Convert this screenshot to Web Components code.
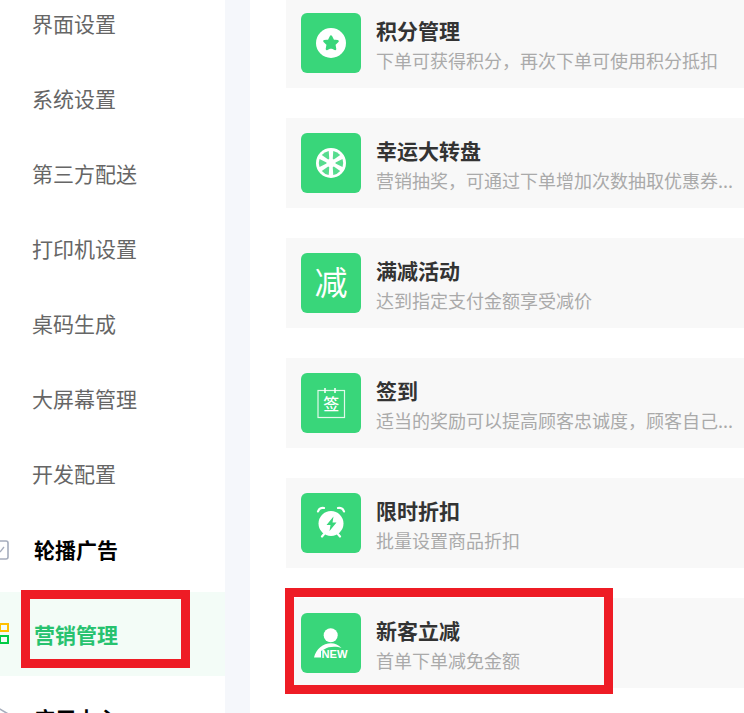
<!DOCTYPE html>
<html>
<head>
<meta charset="utf-8">
<style>
  html, body { margin: 0; height: 713px; overflow: hidden; background: #fff; }
  body { font-family: "Noto Sans CJK SC", "Liberation Sans", sans-serif; }
</style>
</head>
<body>
<app-shell>
  <side-menu slot="side">
    <menu-row>界面设置</menu-row>
    <menu-row>系统设置</menu-row>
    <menu-row>第三方配送</menu-row>
    <menu-row>打印机设置</menu-row>
    <menu-row>桌码生成</menu-row>
    <menu-row>大屏幕管理</menu-row>
    <menu-row>开发配置</menu-row>
    <menu-head icon="ad">轮播广告</menu-head>
    <menu-head icon="grid" active>营销管理</menu-head>
    <menu-head icon="app">应用中心</menu-head>
  </side-menu>
  <promo-list slot="main">
    <promo-card title="积分管理" desc="下单可获得积分，再次下单可使用积分抵扣" icon="star"></promo-card>
    <promo-card title="幸运大转盘" desc="营销抽奖，可通过下单增加次数抽取优惠券..." icon="wheel"></promo-card>
    <promo-card title="满减活动" desc="达到指定支付金额享受减价" icon="minus"></promo-card>
    <promo-card title="签到" desc="适当的奖励可以提高顾客忠诚度，顾客自己..." icon="sign"></promo-card>
    <promo-card title="限时折扣" desc="批量设置商品折扣" icon="clock"></promo-card>
    <promo-card title="新客立减" desc="首单下单减免金额" icon="new"></promo-card>
  </promo-list>
  <mark-box style="left:21px;top:590px;width:169px;height:78px"></mark-box>
  <mark-box style="left:285px;top:588px;width:328px;height:106px"></mark-box>
</app-shell>
<script>
const shellTemplate = document.createElement('template');
shellTemplate.innerHTML = `
<style>
  :host { display: grid; grid-template-columns: 225px 25px 1fr; height: 713px; position: relative; overflow: hidden; }
  .gutter { background: #f5f7fb; }
</style>
<slot name="side"></slot>
<div class="gutter"></div>
<slot name="main"></slot>
<slot></slot>`;

class AppShell extends HTMLElement {
  constructor() {
    super();
    this.attachShadow({ mode: 'open' });
    this.shadowRoot.appendChild(shellTemplate.content.cloneNode(true));
  }
}

const sideTemplate = document.createElement('template');
sideTemplate.innerHTML = `
<style>
  :host { display: flex; flex-direction: column; margin-top: -15px; background: #fff; }
</style>
<slot></slot>`;

class SideMenu extends HTMLElement {
  constructor() {
    super();
    this.attachShadow({ mode: 'open' });
    this.shadowRoot.appendChild(sideTemplate.content.cloneNode(true));
  }
}

const rowTemplate = document.createElement('template');
rowTemplate.innerHTML = `
<style>
  :host { display: flex; align-items: center; flex: none; height: 75px; padding-left: 32px; font-size: 21px; color: #666; }
</style>
<slot></slot>`;

class MenuRow extends HTMLElement {
  constructor() {
    super();
    this.attachShadow({ mode: 'open' });
    this.shadowRoot.appendChild(rowTemplate.content.cloneNode(true));
  }
}

const menuIcons = {
  ad: `<svg width="10" height="24" viewBox="0 0 10 24" fill="none" stroke="#a6adbd" stroke-width="1.6"><rect x="-9" y="4" width="17" height="18" rx="2"/><path d="M0 15L4 10" stroke-width="1.3"/></svg>`,
  grid: `<svg width="10" height="24" viewBox="0 0 10 24" fill="none" stroke-width="2"><rect x="0" y="2" width="8" height="7" stroke="#ffc000"/><rect x="0" y="14" width="8" height="7" stroke="#00cc44"/></svg>`,
  app: `<svg width="10" height="24" viewBox="0 0 10 24" fill="none" stroke="#a6adbd" stroke-width="1.6"><path d="M-2 2L10 9"/></svg>`
};

const headTemplate = document.createElement('template');
headTemplate.innerHTML = `
<style>
  :host { display: flex; align-items: center; flex: none; height: 84px; gap: 24px; font-size: 21px; font-weight: 700; color: #000; }
  :host([icon="ad"]) { margin-top: -3px; margin-bottom: 1px; }
  :host([active]) { background: #f3fcf7; color: #27c26f; }
  .ico { display: flex; width: 10px; }
</style>
<span class="ico"></span><slot></slot>`;

class MenuHead extends HTMLElement {
  constructor() {
    super();
    this.attachShadow({ mode: 'open' });
    this.shadowRoot.appendChild(headTemplate.content.cloneNode(true));
  }
  connectedCallback() {
    this.shadowRoot.querySelector('.ico').innerHTML = menuIcons[this.getAttribute('icon')];
  }
}

const listTemplate = document.createElement('template');
listTemplate.innerHTML = `
<style>
  :host { display: flex; flex-direction: column; gap: 30px; margin-top: -2px; padding-left: 36px; background: #fff; min-width: 0; }
</style>
<slot></slot>`;

class PromoList extends HTMLElement {
  constructor() {
    super();
    this.attachShadow({ mode: 'open' });
    this.shadowRoot.appendChild(listTemplate.content.cloneNode(true));
  }
}

const wedge = 'M29.4 25.5L26 18.5A12 12 0 0 1 34 18.5L30.6 25.5z';
const promoIcons = {
  star: `<svg width="60" height="60" viewBox="0 0 60 60"><circle cx="30" cy="30" r="15" fill="#fff"/><path d="M30 23.5L32 27.6 36.6 28.2 33.3 31.5 34.1 36 30 33.9 25.9 36 26.7 31.5 23.4 28.2 28 27.6z" fill="#39d67a" stroke="#39d67a" stroke-width="2.4" stroke-linejoin="round"/></svg>`,
  wheel: `<svg width="60" height="60" viewBox="0 0 60 60"><circle cx="30" cy="30" r="15" fill="#fff"/><g fill="#39d67a" fill-opacity=".85">${[30, 90, 150, 210, 270, 330].map(a => `<path d="${wedge}" transform="rotate(${a} 30 30)"/>`).join('')}</g></svg>`,
  sign: `<svg width="60" height="60" viewBox="0 0 60 60"><rect x="17" y="17.5" width="26.5" height="27" fill="none" stroke="#fff" stroke-width="1.2" stroke-opacity=".85"/><path d="M24 15v5M34 15v5" stroke="#fff" stroke-width="1.5"/><text x="30.2" y="37" font-size="16" font-weight="500" fill="#fff" text-anchor="middle">签</text></svg>`,
  clock: `<svg width="60" height="60" viewBox="0 0 60 60"><circle cx="30" cy="30.5" r="12.5" fill="#fff"/><path d="M32.5 23.5l-7 8.5h4l-1 6 7-8.5h-4z" fill="#39d67a"/><path d="M17 18.500a5 5 0 0 1 6-3.500M43 18.500a5 5 0 0 0-6-3.500M21 43.500l2.500-3M39 43.500l-2.500-3" fill="none" stroke="#fff" stroke-width="2.2" stroke-linecap="round"/></svg>`,
  new: `<svg width="60" height="60" viewBox="0 0 60 60"><circle cx="29.7" cy="22.2" r="7" fill="#fff"/><path d="M13 44.500C15 36 22 30.300 30 30.300c4 0 7.500 1.700 10.500 4.700C36 33.500 28 33 23 36.500L20 38V44.500z" fill="#fff"/><text x="20.5" y="44.7" font-size="11.2" font-weight="700" fill="#fff" font-family="'Liberation Sans', sans-serif">NEW</text></svg>`
};

const cardTemplate = document.createElement('template');
cardTemplate.innerHTML = `
<style>
  :host { display: flex; align-items: center; gap: 15px; height: 90px; flex: none; padding-left: 15px; background: #f8f8f8; }
  .icon { display: flex; align-items: center; justify-content: center; flex: none; box-sizing: border-box; width: 60px; height: 60px; border-radius: 6px; background: #39d67a; color: #fff; font-size: 33px; line-height: 1; }
  .icon.glyph { padding-bottom: 4px; }
  .text { display: flex; flex-direction: column; min-width: 0; padding-top: 2px; white-space: nowrap; }
  .title { font-size: 21px; line-height: 30px; font-weight: 700; color: #333; }
  .desc { margin-top: 2px; font-size: 18px; line-height: 27px; color: #aaa; }
</style>
<div class="icon"></div>
<div class="text">
  <span class="title"></span>
  <span class="desc"></span>
</div>`;

class PromoCard extends HTMLElement {
  constructor() {
    super();
    this.attachShadow({ mode: 'open' });
    this.shadowRoot.appendChild(cardTemplate.content.cloneNode(true));
  }
  connectedCallback() {
    this.shadowRoot.querySelector('.title').innerText = this.getAttribute('title');
    this.shadowRoot.querySelector('.desc').innerText = this.getAttribute('desc');
    const icon = this.getAttribute('icon');
    const box = this.shadowRoot.querySelector('.icon');
    // the 满减 icon is just the character
    if (icon === 'minus') {
      box.classList.add('glyph');
      box.innerText = '减';
    } else {
      box.innerHTML = promoIcons[icon];
    }
  }
}

const markTemplate = document.createElement('template');
markTemplate.innerHTML = `
<style>
  :host { display: block; position: absolute; box-sizing: border-box; border: 9px solid #ee1c25; }
</style>`;

class MarkBox extends HTMLElement {
  constructor() {
    super();
    this.attachShadow({ mode: 'open' });
    this.shadowRoot.appendChild(markTemplate.content.cloneNode(true));
  }
}

window.customElements.define('app-shell', AppShell);
window.customElements.define('side-menu', SideMenu);
window.customElements.define('menu-row', MenuRow);
window.customElements.define('menu-head', MenuHead);
window.customElements.define('promo-list', PromoList);
window.customElements.define('promo-card', PromoCard);
window.customElements.define('mark-box', MarkBox);
</script>
</body>
</html>
